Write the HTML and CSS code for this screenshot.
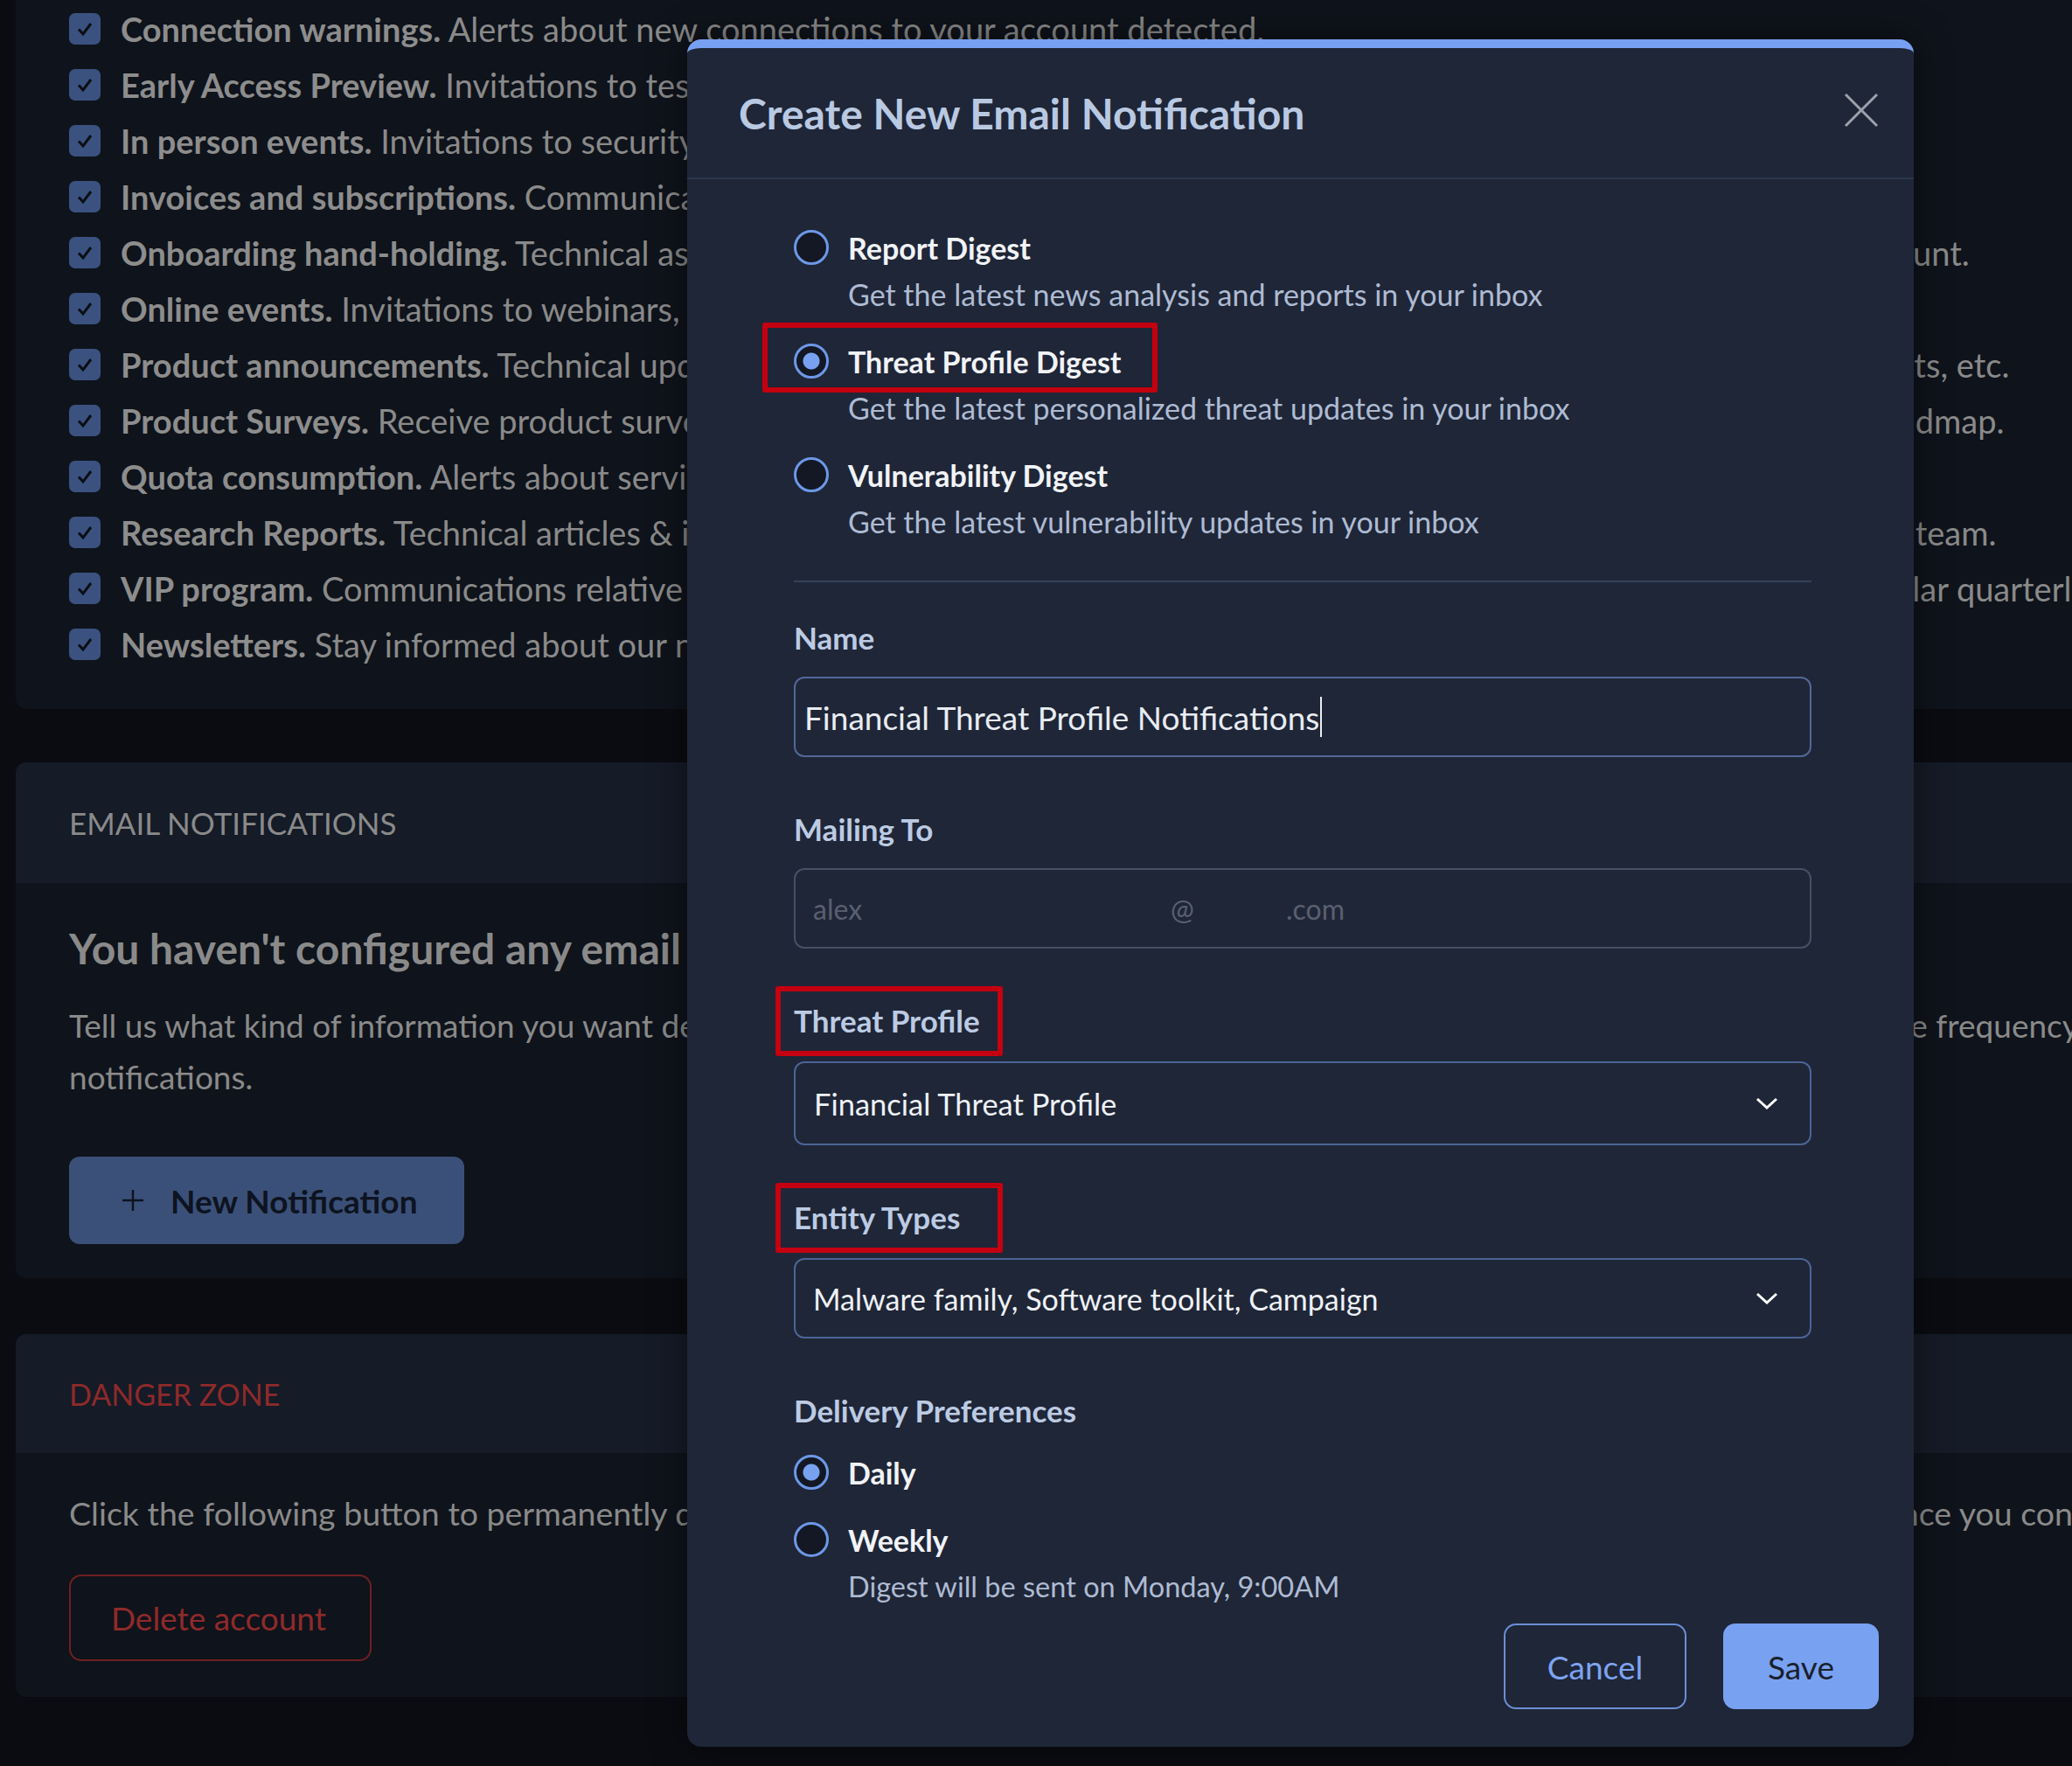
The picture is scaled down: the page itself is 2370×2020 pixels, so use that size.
FILE: index.html
```html
<!DOCTYPE html>
<html lang="en">
<head>
    <meta charset="UTF-8">
    <title>Notification Settings</title>
    <link rel="stylesheet" href="styles.css">
</head>
<body>
    <div class="settings">
        <section class="card prefs">
            <ul class="checklist">
                <li><span class="check"><svg viewBox="0 0 36 36"><path d="M11 18.5l5 5.5 9-12"/></svg></span><span><b>Connection warnings.</b> Alerts about new connections to your account detected.</span></li>
                <li><span class="check"><svg viewBox="0 0 36 36"><path d="M11 18.5l5 5.5 9-12"/></svg></span><span><b>Early Access Preview.</b> Invitations to test new features before they are released.</span></li>
                <li><span class="check"><svg viewBox="0 0 36 36"><path d="M11 18.5l5 5.5 9-12"/></svg></span><span><b>In person events.</b> Invitations to security conferences and meetups.</span></li>
                <li><span class="check"><svg viewBox="0 0 36 36"><path d="M11 18.5l5 5.5 9-12"/></svg></span><span><b>Invoices and subscriptions.</b> Communications about billing and renewals.</span></li>
                <li><span class="check"><svg viewBox="0 0 36 36"><path d="M11 18.5l5 5.5 9-12"/></svg></span><span><b>Onboarding hand-holding.</b> Technical assistance and tips from an expert team to help you get the most out of your new account.</span></li>
                <li><span class="check"><svg viewBox="0 0 36 36"><path d="M11 18.5l5 5.5 9-12"/></svg></span><span><b>Online events.</b> Invitations to webinars, workshops and trainings.</span></li>
                <li><span class="check"><svg viewBox="0 0 36 36"><path d="M11 18.5l5 5.5 9-12"/></svg></span><span><b>Product announcements.</b> Technical updates about new features, improvements, integrations, new data sources, new products, etc.</span></li>
                <li><span class="check"><svg viewBox="0 0 36 36"><path d="M11 18.5l5 5.5 9-12"/></svg></span><span><b>Product Surveys.</b> Receive product surveys and interviews to share feedback and help us shape the future of our product roadmap.</span></li>
                <li><span class="check"><svg viewBox="0 0 36 36"><path d="M11 18.5l5 5.5 9-12"/></svg></span><span><b>Quota consumption.</b> Alerts about service quota usage.</span></li>
                <li><span class="check"><svg viewBox="0 0 36 36"><path d="M11 18.5l5 5.5 9-12"/></svg></span><span><b>Research Reports.</b> Technical articles &amp; in-depth reports about the latest threats and campaigns written by our own research team.</span></li>
                <li><span class="check"><svg viewBox="0 0 36 36"><path d="M11 18.5l5 5.5 9-12"/></svg></span><span><b>VIP program.</b> Communications relative to the VIP program, such as invitations to exclusive events, closed briefings and regular quarterly reviews.</span></li>
                <li><span class="check"><svg viewBox="0 0 36 36"><path d="M11 18.5l5 5.5 9-12"/></svg></span><span><b>Newsletters.</b> Stay informed about our news.</span></li>
            </ul>
        </section>

        <section class="card">
            <header class="card-head">Email Notifications</header>
            <div class="card-body">
                <h2 class="empty-title">You haven't configured any email notifications yet</h2>
                <p class="card-text">Tell us what kind of information you want delivered to your inbox. Choose between threat profile or vulnerability digests and set the frequency of the<br>notifications.</p>
                <button class="btn-new">
                    <svg viewBox="0 0 26 26"><path d="M13 1v24M1 13h24"/></svg>
                    New Notification
                </button>
            </div>
        </section>

        <section class="card danger">
            <header class="card-head">Danger Zone</header>
            <div class="card-body">
                <p class="card-text">Click the following button to permanently delete your account and related data. Please be aware this action cannot be undone once you confirm.</p>
                <button class="btn-delete">Delete account</button>
            </div>
        </section>
    </div>

    <div class="modal">
        <div class="modal-head">
            <h1>Create New Email Notification</h1>
            <svg class="close" viewBox="0 0 40 40"><path d="M2 2l36 36M38 2L2 38"/></svg>
        </div>

        <div class="modal-body">
            <div class="option">
                <div class="option-head"><span class="radio"></span>Report Digest</div>
                <div class="option-desc">Get the latest news analysis and reports in your inbox</div>
            </div>
            <div class="option">
                <div class="option-head mark-option"><span class="radio checked"></span>Threat Profile Digest</div>
                <div class="option-desc">Get the latest personalized threat updates in your inbox</div>
            </div>
            <div class="option">
                <div class="option-head"><span class="radio"></span>Vulnerability Digest</div>
                <div class="option-desc">Get the latest vulnerability updates in your inbox</div>
            </div>

            <hr class="divider">

            <div class="field first">
                <div class="label">Name</div>
                <div class="input focused">Financial Threat Profile Notifications<span class="caret"></span></div>
            </div>

            <div class="field">
                <div class="label">Mailing To</div>
                <div class="input muted">
                    <span class="mail-user">alex</span>
                    <span class="mail-at">@</span>
                    <span>.com</span>
                </div>
            </div>

            <div class="field">
                <div class="label mark-label">Threat Profile</div>
                <div class="select">
                    <span>Financial Threat Profile</span>
                    <svg viewBox="0 0 26 14"><path d="M2 2l11 10 11-10"/></svg>
                </div>
            </div>

            <div class="field">
                <div class="label mark-label">Entity Types</div>
                <div class="select short">
                    <span>Malware family, Software toolkit, Campaign</span>
                    <svg viewBox="0 0 26 14"><path d="M2 2l11 10 11-10"/></svg>
                </div>
            </div>

            <div class="field">
                <div class="label">Delivery Preferences</div>
                <div class="option-head daily"><span class="radio checked"></span>Daily</div>
                <div class="option-head weekly"><span class="radio"></span>Weekly</div>
                <div class="option-desc note">Digest will be sent on Monday, 9:00AM</div>
            </div>
        </div>

        <div class="modal-foot">
            <button class="btn-cancel">Cancel</button>
            <button class="btn-save">Save</button>
        </div>
    </div>
</body>
</html>
```

FILE: styles.css
```css
body {
    margin: 0;
    height: 2020px;
    overflow: hidden;
    position: relative;
    font-family: Lato, "Open Sans", sans-serif;
    background-color: #0a0c11;
    color: #8a8a8a;
}

button {
    font-family: inherit;
    cursor: pointer;
}

/* page behind the dialog (already scrolled down a bit) */

.settings {
    width: 2900px;
    padding-left: 18px;
    margin-top: -40px;
}

.card {
    background-color: #0f131b;
    border-radius: 12px;
    overflow: hidden;
}

.prefs {
    padding: 41px 0 42px 61px;
    margin-bottom: 61px;
}

.checklist {
    list-style: none;
    margin: 0;
    padding: 0;
}

.checklist li {
    display: flex;
    align-items: center;
    gap: 23px;
    height: 64px;
    font-size: 38px;
    white-space: nowrap;
}

.checklist b {
    color: #8d8d8d;
}

.check {
    width: 36px;
    height: 36px;
    flex-shrink: 0;
    border-radius: 7px;
    background-color: #3b5280;
    display: flex;
}

.check svg {
    width: 36px;
    height: 36px;
    fill: none;
    stroke: #0b0e14;
    stroke-width: 3;
}

.card-head {
    height: 138px;
    display: flex;
    align-items: center;
    padding-left: 61px;
    background-color: #151b27;
    font-size: 35px;
    text-transform: uppercase;
    color: #8a8a8a;
}

.card-body {
    padding: 0 61px 39px;
}

.empty-title {
    margin: 45px 0 0;
    font-size: 48px;
    line-height: 60px;
    color: #8a8a8a;
    white-space: nowrap;
}

.card-text {
    margin: 28px 0 0;
    font-size: 37px;
    line-height: 59px;
    white-space: nowrap;
}

.btn-new {
    margin-top: 62px;
    width: 452px;
    height: 100px;
    border: none;
    border-radius: 12px;
    background-color: #3b5078;
    color: #0d1320;
    font-size: 37px;
    font-weight: bold;
    display: flex;
    align-items: center;
    gap: 30px;
    padding-left: 60px;
}

.btn-new svg {
    width: 26px;
    height: 26px;
    fill: none;
    stroke: #0d1320;
    stroke-width: 2.5;
}

.danger {
    margin-top: 64px;
}

.danger .card-head {
    height: 136px;
    color: #8e2a2a;
    font-size: 34px;
}

.danger .card-text {
    margin-top: 39px;
    font-size: 37.5px;
}

.btn-delete {
    margin-top: 41px;
    width: 346px;
    height: 99px;
    border: 2px solid #6e2022;
    border-radius: 14px;
    background-color: transparent;
    color: #8f2a2a;
    font-size: 37px;
    padding-right: 10px;
}

.danger .card-body {
    padding-bottom: 41px;
}

/* dialog */

.modal {
    position: absolute;
    left: 786px;
    top: 45px;
    width: 1403px;
    box-sizing: border-box;
    background-color: #1f2637;
    border-top: 10px solid #77a0f2;
    border-radius: 16px;
    box-shadow: 0 0 40px rgba(0, 0, 0, 0.5);
}

.modal-head {
    height: 148px;
    display: flex;
    align-items: center;
    justify-content: space-between;
    padding: 0 40px 0 59px;
    border-bottom: 2px solid #2b374d;
}

.modal-head h1 {
    margin: 0;
    font-size: 48px;
    color: #b9c9e2;
}

.close {
    width: 40px;
    height: 40px;
    margin-top: -6px;
    fill: none;
    stroke: #9ca1ab;
    stroke-width: 3;
}

.modal-body {
    padding: 51px 117px 0 122px;
}

.option {
    margin-bottom: 22px;
}

.option:nth-child(3) {
    margin-bottom: 0;
}

.option-head {
    display: flex;
    align-items: center;
    gap: 22px;
    height: 54px;
    font-size: 34px;
    font-weight: bold;
    color: #f1f3f7;
}

.option-desc {
    padding-left: 62px;
    line-height: 54px;
    font-size: 34px;
    color: #aebbd3;
}

.option-desc.note {
    font-size: 32.5px;
}

.radio {
    width: 40px;
    height: 40px;
    box-sizing: border-box;
    flex-shrink: 0;
    border: 3px solid #6d98e8;
    border-radius: 50%;
    background-color: #141824;
}

.radio.checked {
    background: radial-gradient(circle, #78a2f0 0 9px, #141824 10px);
}

.divider {
    margin: 40px 0 0;
    border: none;
    height: 2px;
    background-color: #34425a;
}

.field {
    margin-top: 55px;
}

.field.first {
    margin-top: 36px;
}

.label {
    line-height: 54px;
    font-size: 35px;
    font-weight: bold;
    color: #bccbe3;
}

.input {
    margin-top: 18px;
    height: 92px;
    box-sizing: border-box;
    border: 2px solid #465064;
    border-radius: 12px;
    display: flex;
    align-items: center;
    padding-left: 10px;
    font-size: 37px;
    color: #e8ecf2;
}

.input.focused {
    border-color: #52689a;
}

.caret {
    width: 2px;
    height: 46px;
    margin-left: 1px;
    background-color: #e8ecf2;
}

.input.muted {
    padding-left: 20px;
    color: #596070;
    font-size: 32px;
}

.mail-user {
    width: 409px;
}

.mail-at {
    width: 132px;
}

.select {
    margin-top: 20px;
    height: 96px;
    box-sizing: border-box;
    border: 2px solid #4b6496;
    border-radius: 12px;
    display: flex;
    align-items: center;
    justify-content: space-between;
    padding: 0 36px 0 21px;
    font-size: 34.5px;
    color: #eef1f6;
}

.select.short {
    height: 92px;
    padding-left: 20px;
    font-size: 34px;
}

.select svg {
    width: 26px;
    height: 14px;
    fill: none;
    stroke: #ffffff;
    stroke-width: 3;
}

.daily {
    margin-top: 17px;
}

.weekly {
    margin-top: 23px;
}

/* red highlight boxes */

.mark-option,
.mark-label {
    position: relative;
}

.mark-option::after,
.mark-label::after {
    content: "";
    position: absolute;
    border: 6px solid #c40010;
    border-radius: 3px;
}

.mark-option::after {
    left: -36px;
    top: -17px;
    width: 440px;
    height: 68px;
}

.mark-label::after {
    left: -21px;
    top: -12px;
    width: 248px;
    height: 68px;
}

.modal-foot {
    display: flex;
    justify-content: flex-end;
    gap: 42px;
    padding: 15px 40px 43px 0;
}

.modal-foot button {
    height: 98px;
    border-radius: 14px;
    font-size: 37px;
}

.btn-cancel {
    width: 209px;
    border: 2px solid #6a8fd6;
    background-color: transparent;
    color: #7ea4f0;
}

.btn-save {
    width: 178px;
    border: none;
    background-color: #78a1f2;
    color: #1a1f2c;
}
```
